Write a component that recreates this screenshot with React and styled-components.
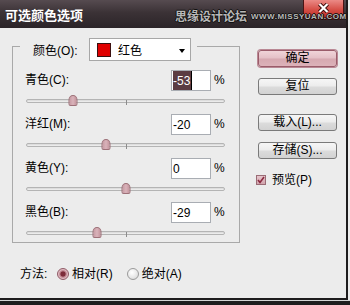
import React from "react";
import styled, { createGlobalStyle } from "styled-components";

const GlobalStyle = createGlobalStyle`
  html, body {
    margin: 0;
    padding: 0;
    background: #ececec;
  }
  body {
    font-family: "Liberation Sans", "Noto Sans CJK SC", sans-serif;
    font-size: 12px;
    color: #000;
  }
`;

const Frame = styled.div`
  width: 350px;
  height: 305px;
  display: flex;
  flex-direction: column;
  background: #ececec;
  overflow: hidden;
`;

const Dialog = styled.div`
  width: 348px;
  height: 300px;
  flex-shrink: 0;
  box-sizing: border-box;
  border-right: 2px solid #1e1c1d;
  border-bottom: 2px solid #1e1c1d;
  display: flex;
  flex-direction: column;
`;

const BottomEdge = styled.div`
  flex: 1;
  border-top: 1px solid #d4d4d4;
  background: #1e1c1d;
`;

const TitleBar = styled.div`
  position: relative;
  height: 28px;
  flex-shrink: 0;
  display: flex;
  align-items: flex-start;
  background: linear-gradient(#564b50, #3b3236 45%, #2b2428);
`;

const Title = styled.div`
  padding: 1px 0 0 5px;
  line-height: 27px;
  color: #fff;
  font-weight: bold;
  font-size: 13px;
  font-family: "Noto Sans CJK SC", sans-serif;
`;

const Watermark = styled.div`
  position: absolute;
  left: 175px;
  top: 7px;
  display: flex;
  align-items: center;
  gap: 4px;
  white-space: nowrap;
  color: #b8b8b8;
  font-weight: bold;
  text-shadow: 1px 0 #111, -1px 0 #111, 0 1px #111, 0 -1px #111;
  z-index: 2;
`;

const WatermarkCn = styled.span`
  font-family: "Noto Sans CJK SC", sans-serif;
  font-size: 12px;
  line-height: 16px;
`;

const WatermarkEn = styled.span`
  font-family: "Liberation Sans", sans-serif;
  font-size: 8px;
  letter-spacing: 0.5px;
  line-height: 16px;
  padding-top: 2px;
`;

const CloseButton = styled.div`
  margin: 0 2px 0 auto;
  width: 41px;
  height: 20px;
  box-sizing: border-box;
  border: 1px solid #4a1414;
  border-top: none;
  border-radius: 0 0 4px 4px;
  background: linear-gradient(#eb8a86, #d65048 50%, #b8241e);
  display: flex;
  align-items: flex-start;
  justify-content: center;
  padding-top: 3px;
`;

const Body = styled.div`
  flex: 1;
  display: flex;
  padding: 10px 0 0 12px;
`;

const LeftColumn = styled.div`
  width: 228px;
  display: flex;
  flex-direction: column;
`;

const GroupBox = styled.fieldset`
  margin: 0;
  width: 228px;
  box-sizing: border-box;
  min-width: 0;
  padding: 15px 14px 0 12px;
  border: 1px solid #a9a9a9;
`;

const Legend = styled.legend`
  margin-left: -5px;
  padding: 0 6px 0 13px;
  height: 17px;
  display: flex;
  align-items: flex-start;
`;

const LegendLabel = styled.span`
  width: 56px;
  line-height: 26px;
`;

const Dropdown = styled.div`
  width: 102px;
  height: 23px;
  flex-shrink: 0;
  box-sizing: border-box;
  border: 1px solid #a7a7a7;
  background: #fff;
  display: flex;
  align-items: center;
  padding: 0 5px 0 7px;
`;

const Swatch = styled.span`
  width: 14px;
  height: 14px;
  box-sizing: border-box;
  border: 1px solid #3a1010;
  background: ${(p) => p.color};
`;

const DropdownText = styled.span`
  flex: 1;
  padding-left: 7px;
  line-height: 18px;
  padding-top: 2px;
`;

const Arrow = styled.span`
  width: 0;
  height: 0;
  border-left: 3.5px solid transparent;
  border-right: 3.5px solid transparent;
  border-top: 4px solid #000;
  margin-top: 2px;
`;

const Row = styled.div`
  display: flex;
  flex-direction: column;
  & + & {
    margin-top: 4px;
  }
`;

const RowHead = styled.div`
  display: flex;
  align-items: center;
  height: 21px;
`;

const Label = styled.span`
  flex: 1;
  line-height: 23px;
`;

const ValueBox = styled.div`
  width: 40px;
  height: 21px;
  box-sizing: border-box;
  border: 1px solid #a9adb3;
  background: #fff;
  padding: 0 1px;
  display: flex;
  align-items: stretch;
  line-height: 20px;
`;

const Selected = styled.span`
  background: #5b3c43;
  color: #fff;
  padding-right: 1px;
`;

const Caret = styled.span`
  width: 1px;
  background: #000;
`;

const Percent = styled.span`
  width: 14px;
  padding-left: 3px;
  box-sizing: border-box;
  line-height: 23px;
`;

const Slider = styled.div`
  position: relative;
  height: 19px;
  margin-left: 1px;
  padding-top: 8px;
  box-sizing: border-box;
`;

const Track = styled.div`
  height: 4px;
  box-sizing: border-box;
  border: 1px solid #b4b4b4;
  border-radius: 2px;
  background: linear-gradient(#d6d6d6, #f2f2f2);
`;

const Tick = styled.span`
  position: absolute;
  left: 50%;
  top: 9px;
  width: 1px;
  height: 5px;
  background: #8c8c8c;
`;

const Thumb = styled.span`
  position: absolute;
  top: 4px;
  width: 9px;
  height: 11px;
  box-sizing: border-box;
  transform: translateX(-50%);
  border: 1px solid #9d7078;
  border-radius: 50% 50% 2px 2px / 45% 45% 2px 2px;
  background: linear-gradient(90deg, #c89aa3, #d9b3ba 50%, #c4939c);
`;

const MethodRow = styled.div`
  margin-top: 22px;
  height: 18px;
  padding-left: 8px;
  display: flex;
  align-items: center;
  line-height: 18px;
`;

const MethodLabel = styled.span`
  width: 37px;
`;

const RadioItem = styled.span`
  display: flex;
  align-items: center;
  gap: 3px;
  margin-right: 14px;
`;

const Radio = styled.span`
  width: 12px;
  height: 12px;
  box-sizing: border-box;
  border-radius: 50%;
  border: 1px solid ${(p) => (p.$checked ? "#8f5a66" : "#9a9a9a")};
  background: ${(p) =>
    p.$checked
      ? "radial-gradient(circle at 50% 50%, #7d2c3a 0 2.2px, #b0707c 2.8px, #e2bcc3 4.5px)"
      : "radial-gradient(circle at 40% 35%, #ffffff, #e6e6e6 60%, #cfcfcf)"};
`;

const RightColumn = styled.div`
  margin-left: 18px;
  width: 79px;
  display: flex;
  flex-direction: column;
  padding-top: 12px;
`;

const Button = styled.div`
  height: 17px;
  box-sizing: border-box;
  margin-top: ${(p) => p.$gap || 0}px;
  border: 1px solid ${(p) => (p.$primary ? "#9a5c6a" : "#7a7a7a")};
  box-shadow: ${(p) => (p.$primary ? "0 0 0 1px #b98894" : "none")};
  border-radius: 3px;
  background: ${(p) =>
    p.$primary
      ? "linear-gradient(#f0d4d8, #e4c0c6 48%, #d6a8b0 52%, #dcb2b9)"
      : "linear-gradient(#f6f6f6, #ececec 48%, #dcdcdc 52%, #d2d2d2)"};
  display: flex;
  align-items: center;
  justify-content: center;
  line-height: 15px;
`;

const CheckRow = styled.div`
  margin: 16px 0 0 -2px;
  height: 10px;
  display: flex;
  align-items: center;
  gap: 6px;
  line-height: 14px;
`;

const CheckBox = styled.span`
  width: 10px;
  height: 10px;
  box-sizing: border-box;
  border: 1px solid #9a6c76;
  background: linear-gradient(#e6c6cc, #d2a4ad);
  display: flex;
  align-items: center;
  justify-content: center;
`;

const channels = [
  { label: "青色(C):", value: -53, selected: true },
  { label: "洋红(M):", value: -20 },
  { label: "黄色(Y):", value: 0 },
  { label: "黑色(B):", value: -29 },
];

const App = () => {
  return (
    <Frame>
      <GlobalStyle />
      <Dialog>
        <TitleBar>
          <Title>可选颜色选项</Title>
          <Watermark>
            <WatermarkCn>思缘设计论坛</WatermarkCn>
            <WatermarkEn>WWW.MISSYUAN.COM</WatermarkEn>
          </Watermark>
          <CloseButton>
            <svg width="11" height="10" viewBox="0 0 11 10">
              <path d="M1.5 1 L9.5 9 M9.5 1 L1.5 9" stroke="#3a0a0a" strokeWidth="4" />
              <path d="M1.5 1 L9.5 9 M9.5 1 L1.5 9" stroke="#fff" strokeWidth="2.2" />
            </svg>
          </CloseButton>
        </TitleBar>
        <Body>
          <LeftColumn>
            <GroupBox>
              <Legend>
                <LegendLabel>颜色(O):</LegendLabel>
                <Dropdown>
                  <Swatch color="#e00000" />
                  <DropdownText>红色</DropdownText>
                  <Arrow />
                </Dropdown>
              </Legend>
              {channels.map((c) => (
                <Row key={c.label}>
                  <RowHead>
                    <Label>{c.label}</Label>
                    <ValueBox>
                      {c.selected ? (
                        <>
                          <Selected>{c.value}</Selected>
                          <Caret />
                        </>
                      ) : (
                        <span>{c.value}</span>
                      )}
                    </ValueBox>
                    <Percent>%</Percent>
                  </RowHead>
                  <Slider>
                    <Track />
                    <Tick />
                    <Thumb style={{ left: `${(c.value + 100) / 2}%` }} />
                  </Slider>
                </Row>
              ))}
            </GroupBox>
            <MethodRow>
              <MethodLabel>方法:</MethodLabel>
              <RadioItem>
                <Radio $checked />
                相对(R)
              </RadioItem>
              <RadioItem>
                <Radio />
                绝对(A)
              </RadioItem>
            </MethodRow>
          </LeftColumn>
          <RightColumn>
            <Button $primary>确定</Button>
            <Button $gap={11}>复位</Button>
            <Button $gap={19}>载入(L)...</Button>
            <Button $gap={11}>存储(S)...</Button>
            <CheckRow>
              <CheckBox>
                <svg width="8" height="8" viewBox="0 0 8 8">
                  <path d="M1 4 L3 6.5 L7 1" stroke="#8a2a40" strokeWidth="1.6" fill="none" />
                </svg>
              </CheckBox>
              预览(P)
            </CheckRow>
          </RightColumn>
        </Body>
      </Dialog>
      <BottomEdge />
    </Frame>
  );
};

export default App;
